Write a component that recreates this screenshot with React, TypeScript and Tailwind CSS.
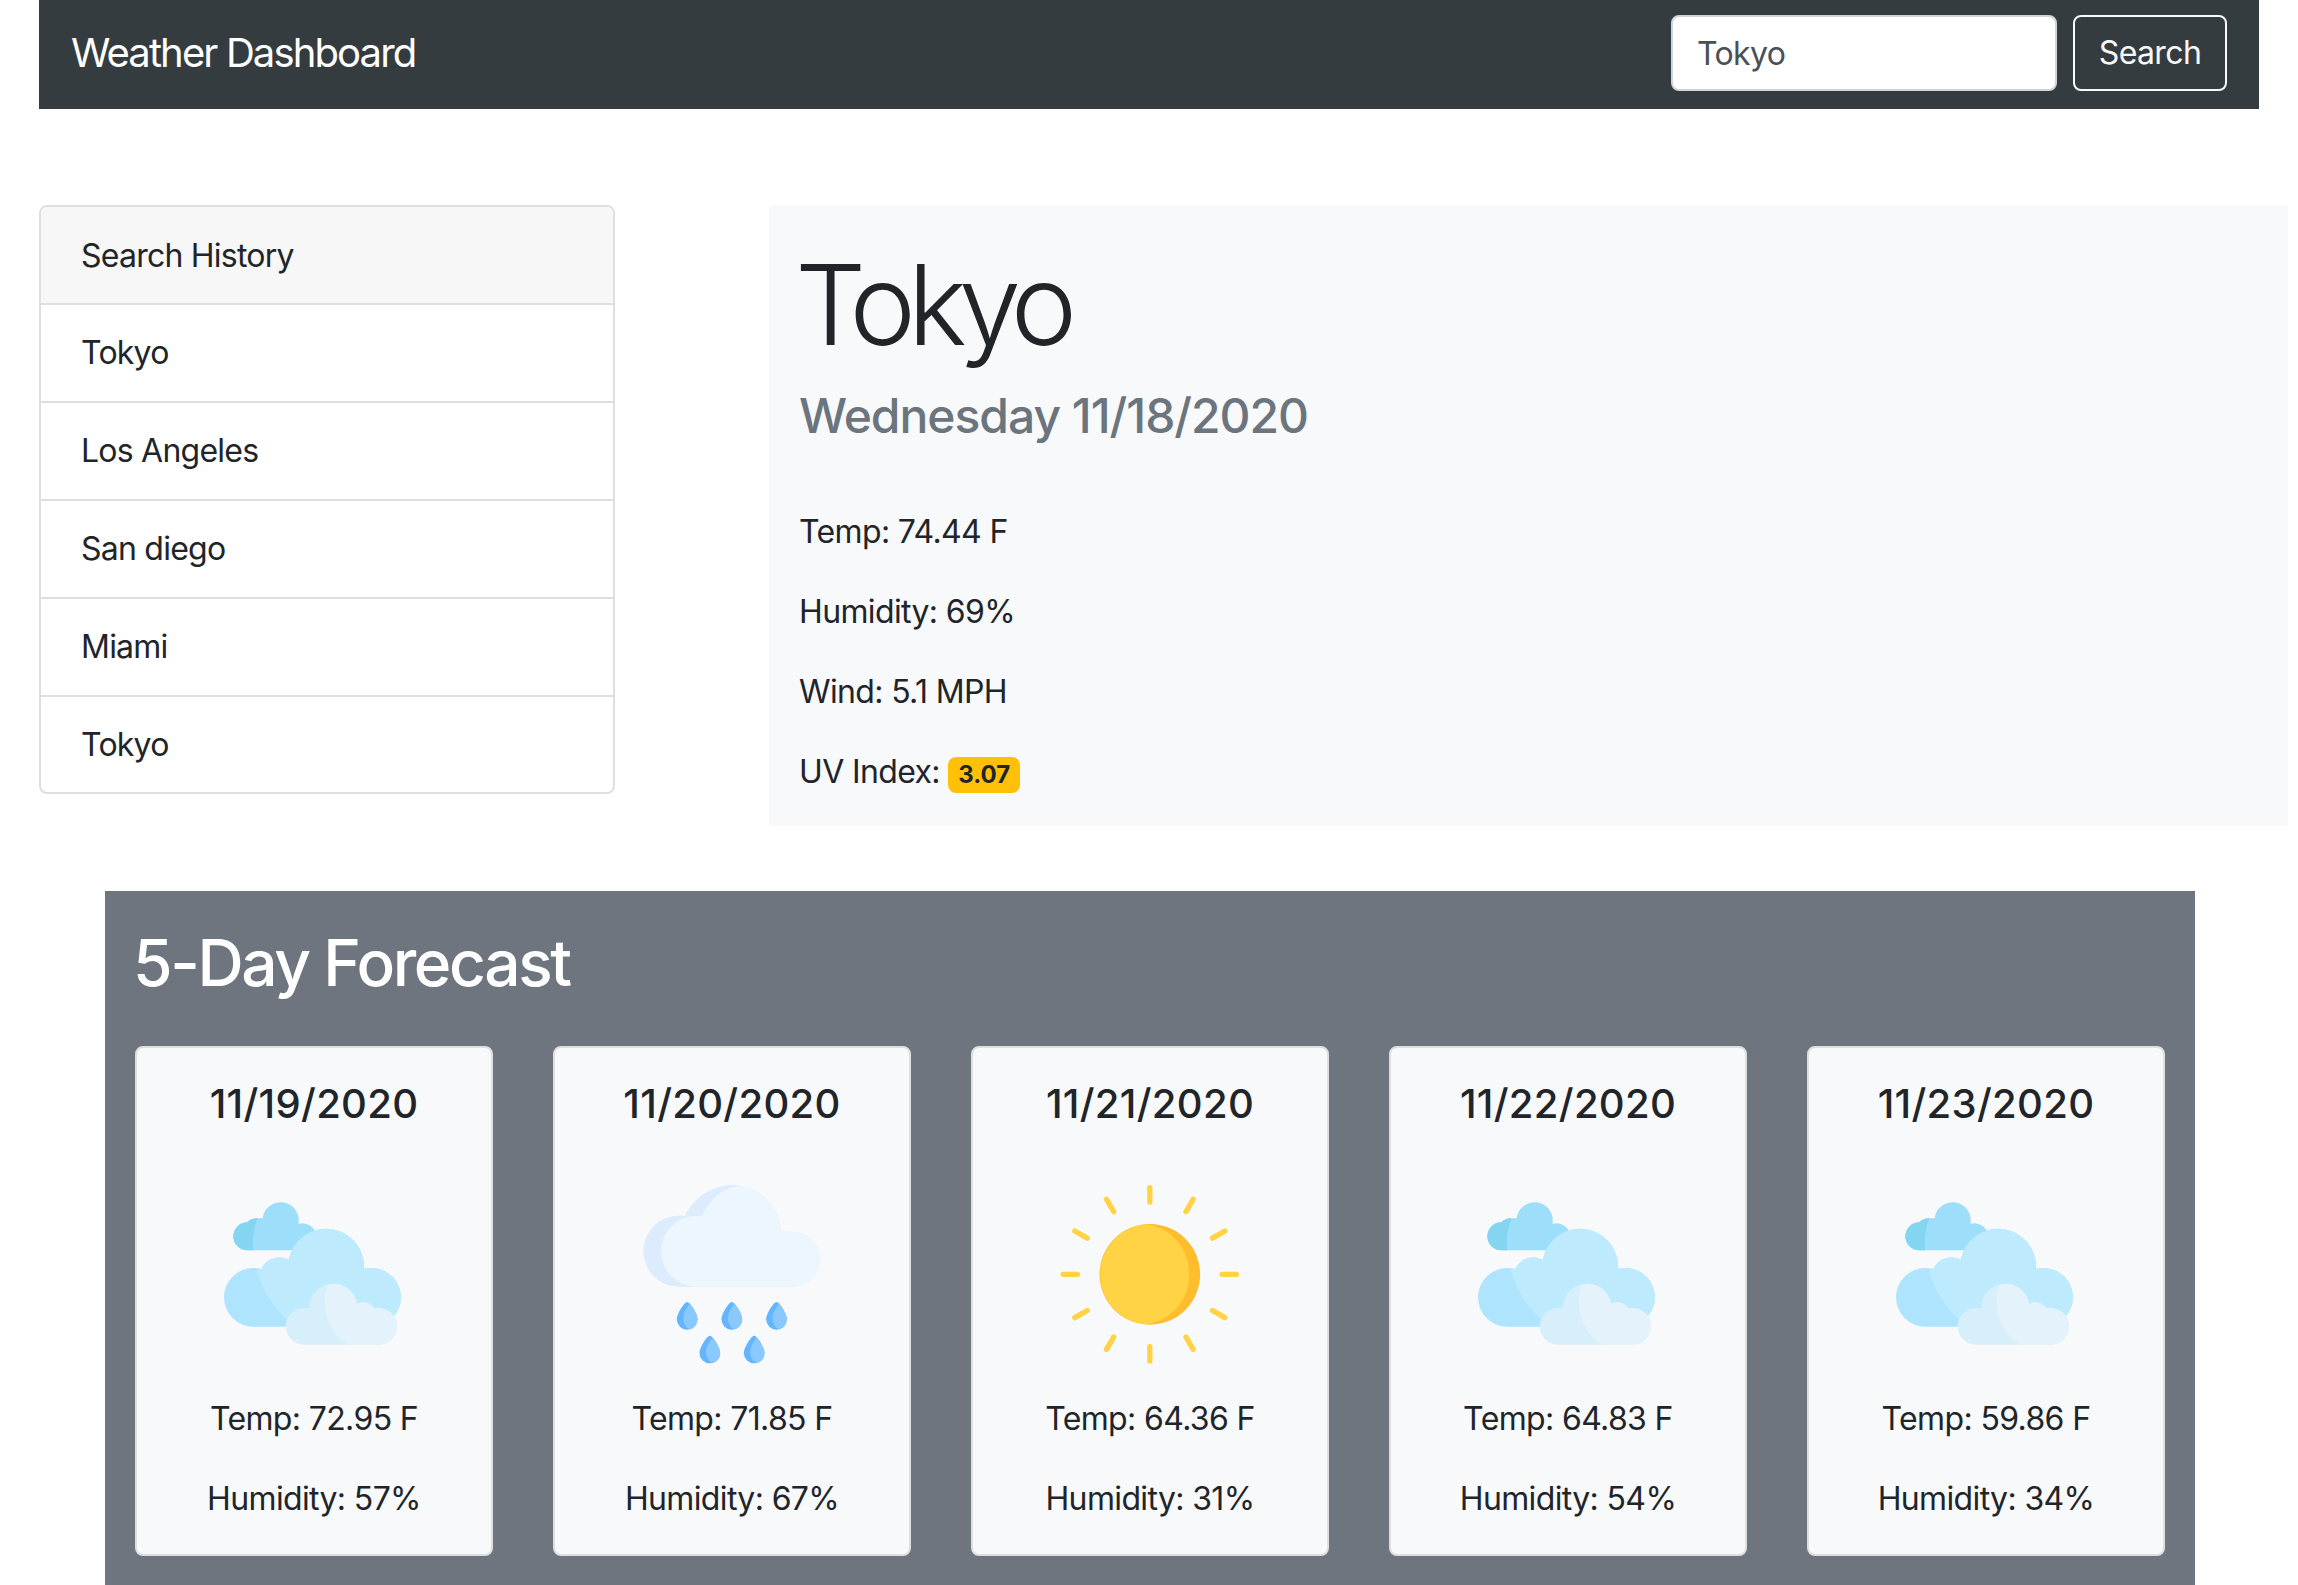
import React from 'react';

const history = ['Tokyo', 'Los Angeles', 'San diego', 'Miami', 'Tokyo'];

const forecast = [
  { date: '11/19/2020', icon: 'cloud', temp: '72.95', humidity: '57' },
  { date: '11/20/2020', icon: 'rain', temp: '71.85', humidity: '67' },
  { date: '11/21/2020', icon: 'sun', temp: '64.36', humidity: '31' },
  { date: '11/22/2020', icon: 'cloud', temp: '64.83', humidity: '54' },
  { date: '11/23/2020', icon: 'cloud', temp: '59.86', humidity: '34' },
];

function CloudIcon() {
  return (
    <svg viewBox="102 72 540 540" className="h-[180px] w-[180px]">
      {/* small cloud at the back */}
      <path
        d="M190 271H172A42 42 0 0 1 172 187C178 180 190 174 203 175H218A54 54 0 0 1 326 187V192A40 40 0 0 1 378 225V271Z"
        fill="#9ddffa"
      />
      <path d="M190 271H172A42 42 0 0 1 172 187C178 180 190 174 203 175C190 205 186 240 190 271Z" fill="#84d6f0" />
      {/* big cloud */}
      <path
        d="M190 500A88 88 0 0 1 190 324C198 324 206 325 214 327A58 58 0 0 1 296 300A114 114 0 0 1 522 327A88 88 0 1 1 545 500Z"
        fill="#aee4fe"
      />
      <path
        d="M200 325L214 327A58 58 0 0 1 296 300A114 114 0 0 1 522 327A88 88 0 1 1 545 500H320C260 460 215 395 200 325Z"
        fill="#bdebfd"
      />
      {/* small cloud in front */}
      <path
        d="M342 554A55 55 0 0 1 342 444H358C358 400 392 371 430 371C466 371 495 395 502 432C515 422 540 425 553 445L566 444A55 55 0 0 1 566 554Z"
        fill="#d7eefb"
      />
      <path
        d="M414 373Q420 371 430 371C466 371 495 395 502 432C515 422 540 425 553 445L566 444A55 55 0 0 1 566 554H478C425 530 385 450 414 373Z"
        fill="#e4f3fb"
      />
    </svg>
  );
}

function RainIcon() {
  const drops = [
    [200, 468],
    [334, 468],
    [468, 468],
    [268, 569],
    [401, 569],
  ];
  return (
    <svg viewBox="64.5 72 540 540" className="h-[180px] w-[180px]">
      <path
        d="M175 380A106.5 106.5 0 0 1 175 167H193C225 105 285 72 345 75C425 85 475 140 482 215H515A82.5 82.5 0 0 1 515 380Z"
        fill="#dcecfc"
      />
      <path
        d="M228 380A106.5 106.5 0 0 1 228 167H246C268 115 310 80 358 77C425 85 475 140 482 215H515A82.5 82.5 0 0 1 515 380Z"
        fill="#ebf6fe"
      />
      {drops.map(([x, y]) => (
        <g key={`${x}-${y}`} transform={`translate(${x} ${y})`}>
          <path d="M0 -42C-8 -42 -31 -8 -31 10A31 31 0 0 0 31 10C31 -8 8 -42 0 -42Z" fill="#62b5fe" />
          <path d="M7 -36C-3 -22 -12 -8 -12 8C-12 24 0 38 8 40C22 38 31 25 31 10C31 -6 17 -22 7 -36Z" fill="#8ac9fe" />
        </g>
      ))}
    </svg>
  );
}

function SunIcon() {
  return (
    <svg viewBox="58.5 42 540 540" className="h-[180px] w-[180px]">
      {Array.from({ length: 12 }).map((_, index) => (
        <line
          key={index}
          x1="328"
          y1="53"
          x2="328"
          y2="96"
          stroke="#ffd344"
          strokeWidth="16"
          strokeLinecap="round"
          transform={`rotate(${index * 30} 328 313)`}
        />
      ))}
      <circle cx="328" cy="313" r="151" fill="#ffbd2e" />
      <path d="M318 162.500A151 151 0 0 0 318 463.500C395 450 446 390 446 313C446 236 395 175 318 162.500Z" fill="#ffd344" />
    </svg>
  );
}

function WeatherIcon({ icon }: { icon: string }) {
  if (icon === 'rain') return <RainIcon />;
  if (icon === 'sun') return <SunIcon />;
  return <CloudIcon />;
}

export default function App() {
  return (
    <div className="h-[1585px] w-[2298px] overflow-hidden bg-white text-[32px] leading-[48px] tracking-[-0.02em] text-[#212529] [font-family:Inter,sans-serif]">
      <nav className="ml-[39px] flex h-[109px] w-[2220px] items-center justify-between bg-[#353c3f] px-[32px] pb-[3px]">
        <span className="text-[40px] leading-[60px] tracking-[-0.047em] text-white">Weather Dashboard</span>
        <form className="flex gap-[16px]">
          <input
            defaultValue="Tokyo"
            className="h-[76px] w-[386px] rounded-[8px] border-2 border-[#ced4da] bg-white px-[24px] text-[#495057]"
          />
          <button type="button" className="h-[76px] w-[154px] rounded-[8px] border-2 border-[#f8f9fa] text-[#f8f9fa]">
            Search
          </button>
        </form>
      </nav>

      <div className="mt-[96px] flex">
        {/* Search history */}
        <div className="ml-[39px] h-[589px] w-[576px] overflow-hidden rounded-[8px] border-2 border-[#dfdfdf] tracking-[-0.024em]">
          <div className="h-[96px] bg-[#f7f7f7] px-[40px] py-[25px]">Search History</div>
          {history.map((city, index) => (
            <div key={index} className="h-[98px] border-t-2 border-[#dfdfdf] px-[40px] py-[24px]">
              {city}
            </div>
          ))}
        </div>

        {/* Current weather */}
        <div className="ml-[154px] h-[621px] w-[1519px] bg-[#f8f9fa] px-[30px] pt-[32px]">
          <h1 className="-ml-[4px] text-[112px] leading-[134px] font-light tracking-[-0.072em]">Tokyo</h1>
          <h3 className="mt-[16px] text-[48px] leading-[58px] font-medium tracking-[-0.0215em] text-[#6c757d]">
            Wednesday 11/18/2020
          </h3>
          <p className="mt-[63px] mb-[32px]">Temp: 74.44 F</p>
          <p className="mb-[32px]">Humidity: 69%</p>
          <p className="mb-[32px]">Wind: 5.1 MPH</p>
          <p>
            UV Index:{' '}
            <span className="inline-block rounded-[8px] bg-[#ffc107] px-[10px] py-[6px] text-[24px] leading-none font-bold tracking-normal">
              3.07
            </span>
          </p>
        </div>
      </div>

      {/* 5-day forecast */}
      <section className="mt-[65px] ml-[105px] w-[2090px] bg-[#6e757e] p-[30px]">
        <h2 className="-ml-[2px] pt-[3px] text-[64px] leading-[77px] font-medium tracking-[-0.037em] text-white">
          5-Day Forecast
        </h2>
        <div className="mt-[45px] flex gap-[60px]">
          {forecast.map((day) => (
            <div
              key={day.date}
              className="flex h-[510px] w-[358px] flex-col items-center rounded-[8px] border-2 border-[#dfdfdf] bg-[#f8f9fa] pt-[32px] text-center"
            >
              <h4 className="text-[40px] leading-[48px] font-medium tracking-[0.008em]">{day.date}</h4>
              <div className="mt-[56px]">
                <WeatherIcon icon={day.icon} />
              </div>
              <p className="mt-[31px] mb-[32px]">Temp: {day.temp} F</p>
              <p>Humidity: {day.humidity}%</p>
            </div>
          ))}
        </div>
      </section>
    </div>
  );
}
